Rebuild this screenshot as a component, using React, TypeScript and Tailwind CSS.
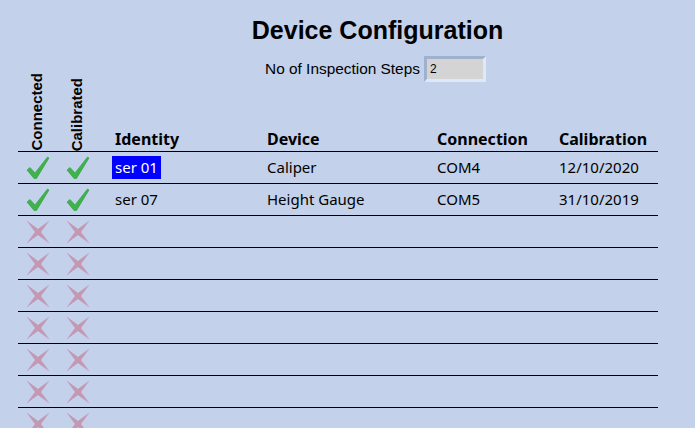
import React from "react";

const Check = () => (
  <svg width="24" height="24" viewBox="0 0 24 24" className="block">
    <polygon points="1,14 4,11.5 9,17 21.5,1 23,2 10.5,22.5 8,22.5" fill="#3cb44b" stroke="#2f9a3d" strokeWidth="0.6" strokeLinejoin="round" />
  </svg>
);

const Cross = () => (
  <svg width="24" height="24" viewBox="0 0 24 24" className="block">
    <polygon
      points="0.5,0.5 12,9 23.5,0.5 15,12 23.5,23.5 12,15 0.5,23.5 9,12"
      fill="#c497b3"
    />
  </svg>
);

type Row = { ok: boolean; id?: string; device?: string; conn?: string; cal?: string; sel?: boolean };

const rows: Row[] = [
  { ok: true, id: "ser 01", device: "Caliper", conn: "COM4", cal: "12/10/2020", sel: true },
  { ok: true, id: "ser 07", device: "Height Gauge", conn: "COM5", cal: "31/10/2019" },
  { ok: false },
  { ok: false },
  { ok: false },
  { ok: false },
  { ok: false },
  { ok: false },
  { ok: false },
];

export default function App() {
  const seg = { fontFamily: '"Noto Sans", "Open Sans", sans-serif' };
  const arial = { fontFamily: '"Liberation Sans", Arial, sans-serif' };
  return (
    <div className="w-[695px] h-[428px] overflow-hidden bg-[#c3d1ea] text-black" style={arial}>
      <div className="pl-[56px] pt-[14px] flex flex-col items-center">
        <div className="text-[25px] font-bold leading-[32px] ml-[4px]">Device Configuration</div>
        <div className="mt-[10px] flex items-center gap-[4px]">
          <span className="text-[15.4px] leading-[20px]">No of Inspection Steps</span>
          <div className="w-[62px] h-[26px] border-[3px] border-t-[#9fb1cf] border-l-[#9fb1cf] border-b-[#dfe8f6] border-r-[#dfe8f6] bg-[#d4d4d4] flex items-center pl-[3px] text-[12px]">
            2
          </div>
        </div>
      </div>
      <div className="ml-[18px] w-[640px]">
        <div className="flex items-end h-[70px] border-b border-black" style={seg}>
          <div className="w-[40px] flex justify-center items-end h-full">
            <div
              className="rotate-180 text-[15px] font-bold leading-[15px] pb-[5px] mr-[3px] [writing-mode:vertical-rl] shrink-0"
              style={arial}
            >
              Connected
            </div>
          </div>
          <div className="w-[40px] flex justify-center items-end h-full">
            <div
              className="rotate-180 text-[15px] font-bold leading-[15px] pb-[5px] mr-[3px] [writing-mode:vertical-rl] shrink-0"
              style={arial}
            >
              Calibrated
            </div>
          </div>
          <div className="w-[166px] pl-[17px] text-[16px] font-bold leading-[22px] pb-[1px]">Identity</div>
          <div className="w-[170px] pl-[3px] text-[16px] font-bold leading-[22px] pb-[1px]">Device</div>
          <div className="w-[122px] pl-[3px] text-[16px] font-bold leading-[22px] pb-[1px]">Connection</div>
          <div className="flex-1 pl-[3px] text-[16px] font-bold leading-[22px] pb-[1px]">Calibration</div>
        </div>
        {rows.map((r, i) => (
          <div key={i} className="flex items-center h-[32px] border-b border-black text-[15px]" style={seg}>
            <div className="w-[40px] flex justify-center">{r.ok ? <Check /> : <Cross />}</div>
            <div className="w-[40px] flex justify-center">{r.ok ? <Check /> : <Cross />}</div>
            <div className="w-[166px] pl-[14px]">
              {r.id && (
                <span className={"inline-block px-[3px] leading-[23px] " + (r.sel ? "bg-[#0000ff] text-white" : "")}>
                  {r.id}
                </span>
              )}
            </div>
            <div className="w-[170px] pl-[3px]">{r.device}</div>
            <div className="w-[122px] pl-[3px]">{r.conn}</div>
            <div className="flex-1 pl-[3px]">{r.cal}</div>
          </div>
        ))}
      </div>
    </div>
  );
}
